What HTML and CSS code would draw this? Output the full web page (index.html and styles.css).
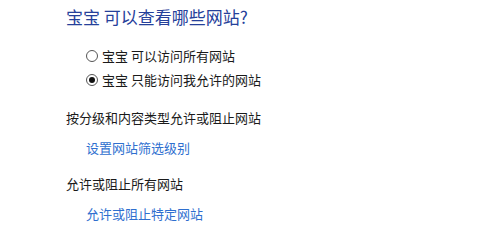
FILE: index.html
```html
<!DOCTYPE html>
<html lang="zh-CN">
<head>
<meta charset="utf-8">
<title>宝宝 可以查看哪些网站?</title>
<link rel="stylesheet" href="styles.css">
</head>
<body>
<div class="page">
  <h1 class="title">宝宝 可以查看哪些网站?</h1>
  <div class="options">
    <label class="option"><span class="radio"></span><span>宝宝 可以访问所有网站</span></label>
    <label class="option"><span class="radio checked"></span><span>宝宝 只能访问我允许的网站</span></label>
  </div>
  <div class="section">
    <div class="heading">按分级和内容类型允许或阻止网站</div>
    <a class="link" href="#">设置网站筛选级别</a>
  </div>
  <div class="section">
    <div class="heading">允许或阻止所有网站</div>
    <a class="link" href="#">允许或阻止特定网站</a>
  </div>
</div>
</body>
</html>
```
FILE: styles.css
```css
html, body {
  margin: 0;
  padding: 0;
  background: #ffffff;
}
body {
  font-family: "Noto Sans CJK SC", "Noto Sans", sans-serif;
  color: #1a1a1a;
  font-size: 13px;
}
.page {
  padding: 5px 0 0 66px;
  display: flex;
  flex-direction: column;
}
.title {
  margin: 0;
  font-size: 17px;
  font-weight: normal;
  line-height: 24px;
  color: #25409a;
}
.options {
  margin: 15px 0 0 20px;
  display: flex;
  flex-direction: column;
}
.option {
  display: flex;
  align-items: center;
  height: 24px;
  line-height: 24px;
}
.radio {
  width: 10px;
  height: 10px;
  border: 1px solid #555;
  border-radius: 50%;
  background: #fff;
  margin-right: 4px;
  display: flex;
  align-items: center;
  justify-content: center;
}
.radio.checked::after {
  content: "";
  width: 6px;
  height: 6px;
  border-radius: 50%;
  background: #111;
}
.section {
  margin-top: 16px;
  display: flex;
  flex-direction: column;
  align-items: flex-start;
}
.heading {
  line-height: 20px;
}
.link {
  margin: 10px 0 0 20px;
  line-height: 20px;
  color: #2f6fcf;
  text-decoration: none;
}
```
